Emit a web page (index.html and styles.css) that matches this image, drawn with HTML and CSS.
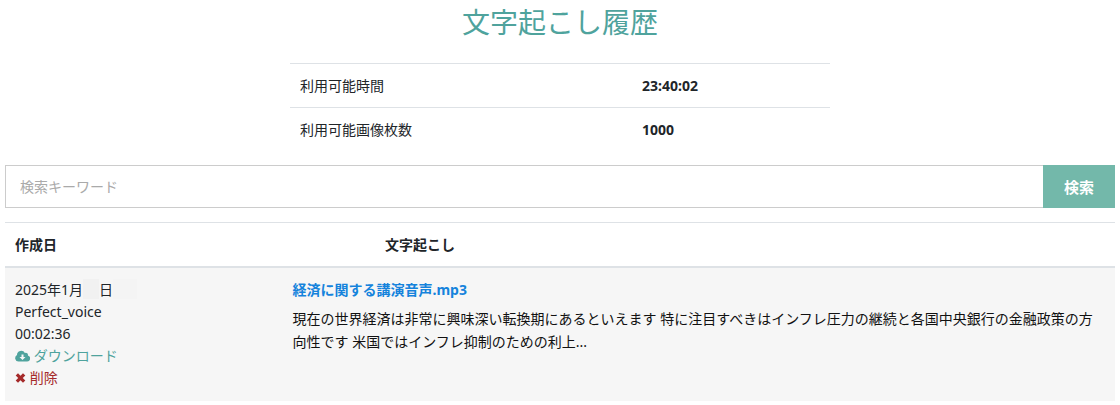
FILE: index.html
```html
<!DOCTYPE html>
<html lang="ja">
<head>
  <meta charset="UTF-8">
  <meta name="viewport" content="width=device-width, initial-scale=1.0">
  <title>文字起こし履歴</title>
  <link rel="stylesheet" href="styles.css">
</head>
<body>
  <main class="container">
    <h1>文字起こし履歴</h1>

    <table class="table quota">
      <tbody>
        <tr>
          <th scope="row">利用可能時間</th>
          <td>23:40:02</td>
        </tr>
        <tr>
          <th scope="row">利用可能画像枚数</th>
          <td>1000</td>
        </tr>
      </tbody>
    </table>

    <form class="search">
      <input type="text" name="keyword" placeholder="検索キーワード" aria-label="検索キーワード">
      <button type="submit">検索</button>
    </form>

    <table class="table history">
      <colgroup>
        <col class="col-date">
        <col class="col-gap">
        <col>
      </colgroup>
      <thead>
        <tr>
          <th scope="col" colspan="2">作成日</th>
          <th scope="col">文字起こし</th>
        </tr>
      </thead>
      <tbody>
        <tr>
          <td>
            <div>2025年1月<span class="mask"></span>日<span class="mask mask-time"></span></div>
            <div>Perfect_voice</div>
            <div>00:02:36</div>
            <div>
              <a href="#" class="download"><svg class="icon-cloud" viewBox="0 0 15 12" aria-hidden="true"><path fill-rule="evenodd" d="M3.5 11.5A3.4 3.4 0 0 1 2 5.1 4.2 4.2 0 0 1 9.9 3a2.2 2.2 0 0 1 3 2.6A3 3 0 0 1 12 11.500zM6.500 4.500v2.500h-2l3 3 3-3h-2v-2.500z"/></svg> ダウンロード</a>
            </div>
            <div>
              <a href="#" class="delete"><svg class="icon-times" viewBox="0 0 11 11" aria-hidden="true"><path d="M3 .7 5.500 3.200 8 .7 10.300 3 7.800 5.500 10.300 8 8 10.300 5.500 7.800 3 10.300 .7 8 3.200 5.500 .7 3z"/></svg> 削除</a>
            </div>
          </td>
          <td colspan="2">
            <a href="#" class="file">経済に関する講演音声.mp3</a>
            <p>現在の世界経済は非常に興味深い転換期にあるといえます 特に注目すべきはインフレ圧力の継続と各国中央銀行の金融政策の方向性です 米国ではインフレ抑制のための利上...</p>
          </td>
        </tr>
      </tbody>
    </table>
  </main>
</body>
</html>
```
FILE: styles.css
```css
* { box-sizing: border-box; }
body {
  margin: 0;
  font-family: "Noto Sans", "Noto Sans CJK JP", sans-serif;
  font-size: 14px;
  line-height: 22px;
  color: #212529;
  background: #fff;
}
a { text-decoration: none; }
.container { padding: 0 5px; }
h1 {
  margin: 0 0 19px;
  font-size: 28px;
  line-height: 44px;
  font-weight: 400;
  text-align: center;
  color: #4fa39d;
}

/* tables */
.table {
  width: 100%;
  border-collapse: separate;
  border-spacing: 0;
  table-layout: fixed;
}
.table th,
.table td {
  padding: 11px 10px 10px;
  border-top: 1px solid #dee2e6;
  text-align: left;
  vertical-align: top;
}
.quota {
  max-width: 540px;
  margin: 0 auto 14px;
}
.quota th {
  width: 342px;
  font-weight: 400;
}
.quota td { font-weight: 700; }

/* search */
.search {
  display: flex;
  margin-bottom: 14px;
}
.search input {
  flex: 1;
  min-width: 0;
  padding: 10px 14px 9px;
  border: 1px solid #ccc;
  border-right: 0;
  border-radius: 0;
  font: inherit;
  color: inherit;
}
.search input::placeholder { color: #aaa; }
.search button {
  padding: 10px 21px;
  border: 0;
  font: inherit;
  font-size: 15px;
  font-weight: 700;
  color: #fff;
  background: #73b8aa;
}

/* history */
.col-date { width: 25%; }
.col-gap { width: 8.3333%; }
.history thead th { border-bottom: 2px solid #dee2e6; }
.history tbody td {
  padding-bottom: 12px;
  border-top: 0;
  background: #f6f6f6;
}
.history p {
  margin: 6px 0 0;
  line-height: 23px;
  color: #111;
}
.mask {
  display: inline-block;
  width: 16px;
  height: 20px;
  background: #f1f1f1;
  vertical-align: top;
}
.mask-time { width: 24px; background: #f4f4f4; }
.file {
  font-weight: 700;
  color: #1583dc;
}
.download { color: #4fa39d; }
.delete { color: #a52a2a; }
.download svg,
.delete svg {
  height: 12px;
  fill: currentColor;
  vertical-align: -1px;
}
.icon-cloud { width: 15px; }
.icon-times { width: 11px; }
```
